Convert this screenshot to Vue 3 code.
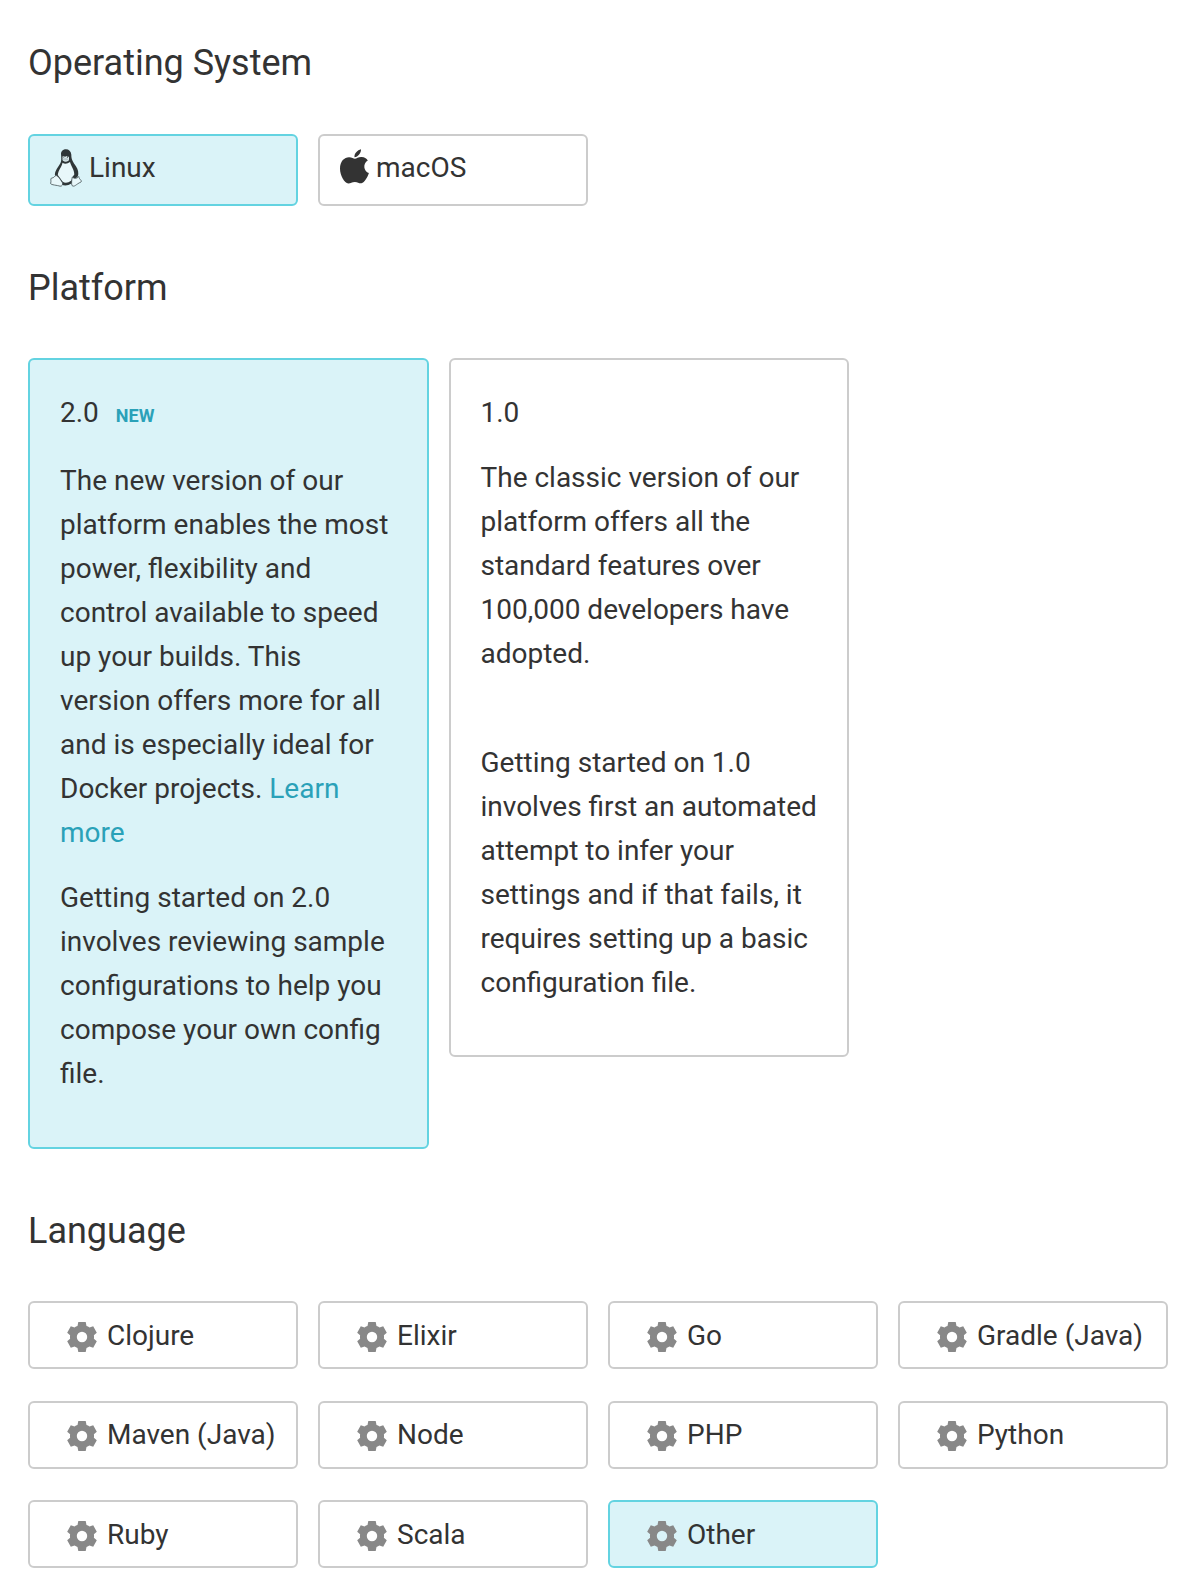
<script setup>
import { ref } from 'vue'

const os = ref('linux')
const platform = ref('2.0')
const language = ref('Other')
const languages = [
  'Clojure', 'Elixir', 'Go', 'Gradle (Java)',
  'Maven (Java)', 'Node', 'PHP', 'Python',
  'Ruby', 'Scala', 'Other',
]
</script>

<template>
  <main class="setup">
    <section class="group">
      <h2 class="heading">Operating System</h2>
      <div class="options">
        <div class="option os" :class="{ selected: os === 'linux' }" @click="os = 'linux'">
          <svg class="os-icon" width="32" height="38" viewBox="0 0 32 38">
            <path d="M11 5C11 2 13.200.200 16 .2S21 2.200 21.300 5.500C21.300 9 21.800 11 24 14.500C27 18.500 28.500 21 28.300 25C28.200 27 27.500 28 26 29L21.500 34.500Q16 38 11.500 35.500L6 28C4.500 26.500 4.700 24.500 5.500 22.500C7 19 9 16.500 10.500 14C11.700 11.500 11.200 8 11 5Z" fill="#2f3638"/>
            <path d="M12.500 13.800Q16 16 20 13C21 17 24.300 20.500 24.300 25.500L22.500 28L21.500 31.500Q16 35.500 12.500 32.500L7.800 26C8.300 21 11.800 18 12.500 13.800Z" fill="#e8f7fa"/>
            <path d="M12.400 7.700Q13.500 6 15 8Q17 6 19 8.200L19 11.300Q16.300 14 12.700 11.500Z" fill="#dcecef"/>
            <path d="M12.300 10.200Q15.500 8 18.800 10.300Q15.800 12.800 12.300 10.200Z" fill="#b9c8cb"/>
            <circle cx="13.700" cy="8" r=".6" fill="#2f3638"/><circle cx="17.400" cy="8" r=".7" fill="#2f3638"/>
            <path d="M6.200 26.500C4.500 26.500 4.500 29 1.300 29.200C.2 30 1.500 32 .6 34.500C.8 36 7.500 36.200 10 37.200C12 37.500 13.200 35.500 12.300 33.500C10.500 30.800 8.500 27 6.200 26.500Z" fill="#e8f7fa" stroke="#445054" stroke-width=".8"/>
            <path d="M22.300 28C21.700 31 21.200 35 22 36.500C24.500 38.500 25.500 35.500 31 33C32.500 31.500 29.300 30.800 28.700 27.500C27 29.800 24 29.800 22.300 28Z" fill="#e8f7fa" stroke="#445054" stroke-width=".8"/>
          </svg>
          <span>Linux</span>
        </div>
        <div class="option os" :class="{ selected: os === 'macos' }" @click="os = 'macos'">
          <svg class="os-icon" width="29" height="35" viewBox="0 0 29 35">
            <path d="M21 .2C21.300 3.800 18 8.100 14.500 8.200C14 4.500 17.500 1 21 .2ZM14.900 9.800C16.400 9.800 18.600 7.900 21.700 8.100C24.400 8.200 26.500 9.300 27.800 11.400C22.600 14.600 23.500 21.900 28.900 24.100C27.700 28 24.500 33.700 21.500 34.300C19 34.700 18 32.900 14.900 32.900C11.800 32.900 10.500 34.600 8.300 34.500C4.500 34.200 0 26.500 0 19.500C0 12 4.500 8.300 9 8.200C11.600 8.100 13.600 9.800 14.900 9.800Z" fill="#333"/>
          </svg>
          <span>macOS</span>
        </div>
      </div>
    </section>

    <section class="group">
      <h2 class="heading">Platform</h2>
      <div class="options platforms">
        <article class="platform" :class="{ selected: platform === '2.0' }" @click="platform = '2.0'">
          <h3 class="version new-version">2.0 <span class="badge">NEW</span></h3>
          <p>The new version of our platform enables the most power, flexibility and control available to speed up your builds. This version offers more for all and is especially ideal for Docker projects. <a class="link">Learn more</a></p>
          <p>Getting started on 2.0 involves reviewing sample configurations to help you compose your own config file.</p>
        </article>
        <article class="platform classic" :class="{ selected: platform === '1.0' }" @click="platform = '1.0'">
          <h3 class="version">1.0</h3>
          <p class="summary">The classic version of our platform offers all the standard features over 100,000 developers have adopted.</p>
          <p>Getting started on 1.0 involves first an automated attempt to infer your settings and if that fails, it requires setting up a basic configuration file.</p>
        </article>
      </div>
    </section>

    <section class="group">
      <h2 class="heading">Language</h2>
      <div class="languages">
        <div v-for="name in languages" :key="name" class="option language" :class="{ selected: language === name }" @click="language = name">
          <svg class="gear" width="30" height="30" viewBox="0 0 30 30">
            <path fill-rule="evenodd" fill="#888" d="M11.300 0H18.700L19.500 4Q21 4.500 22.500 5.400L26.200 4.300L29.800 10.700L26.900 13.200Q27.200 15 26.900 16.800L29.800 19.300L26.200 25.700L22.500 24.600Q21 25.500 19.500 26L18.700 30H11.300L10.500 26Q9 25.500 7.500 24.600L3.800 25.700L.2 19.300L3.100 16.800Q2.800 15 3.100 13.200L.2 10.700L3.800 4.300L7.500 5.400Q9 4.500 10.500 4ZM15 9.800A5.200 5.200 0 1 0 15 20.200A5.200 5.200 0 1 0 15 9.800Z"/>
          </svg>
          <span>{{ name }}</span>
        </div>
      </div>
    </section>
  </main>
</template>

<style>
body {
  margin: 0;
  background: #fff;
}
</style>

<style scoped>
.setup {
  box-sizing: border-box;
  width: 1202px;
  height: 1588px;
  padding: 43px 28px 0;
  overflow: hidden;
  color: #333;
  font-family: Roboto, sans-serif;
  font-size: 28px;
  line-height: 44px;
}
.group {
  margin-bottom: 62px;
}
.heading {
  margin: 0 0 50px;
  font-size: 36px;
  font-weight: 400;
  line-height: 40px;
}
.group:first-child .heading {
  margin-bottom: 51px;
}
.options {
  display: flex;
  gap: 20px;
}
.option,
.platform {
  box-sizing: border-box;
  border: 2px solid #ccc;
  border-radius: 6px;
  background: #fff;
}
.option.selected,
.platform.selected {
  border-color: #63d3e1;
  background: #daf3f8;
}
.option {
  display: flex;
  width: 270px;
}
.os {
  height: 72px;
  padding: 10px 20px 0;
}
.os-icon {
  margin: 3px 7px 0 0;
}
.platforms {
  align-items: flex-start;
}
.platform {
  width: 400.500px;
  padding: 31px 30px 30px;
}
.platform.classic {
  padding-bottom: 29px;
}
.version {
  margin: 0 0 21px;
  font-size: 28px;
  font-weight: 400;
  line-height: 44px;
}
.new-version {
  margin-bottom: 24px;
}
.badge {
  margin-left: 10px;
  color: #2aa1b8;
  font-size: 18px;
  font-weight: 700;
  line-height: 1;
}
.platform p {
  margin: 0 0 21px;
}
.platform .summary {
  margin-bottom: 65px;
}
.link {
  color: #2aa1b8;
}
.languages {
  display: grid;
  grid-template-columns: repeat(4, 270px);
  gap: 31.500px 20px;
}
.language {
  height: 68px;
  padding: 10.900px 0 0 37px;
}
.gear {
  margin: 8.100px 10px 0 0;
}
</style>
